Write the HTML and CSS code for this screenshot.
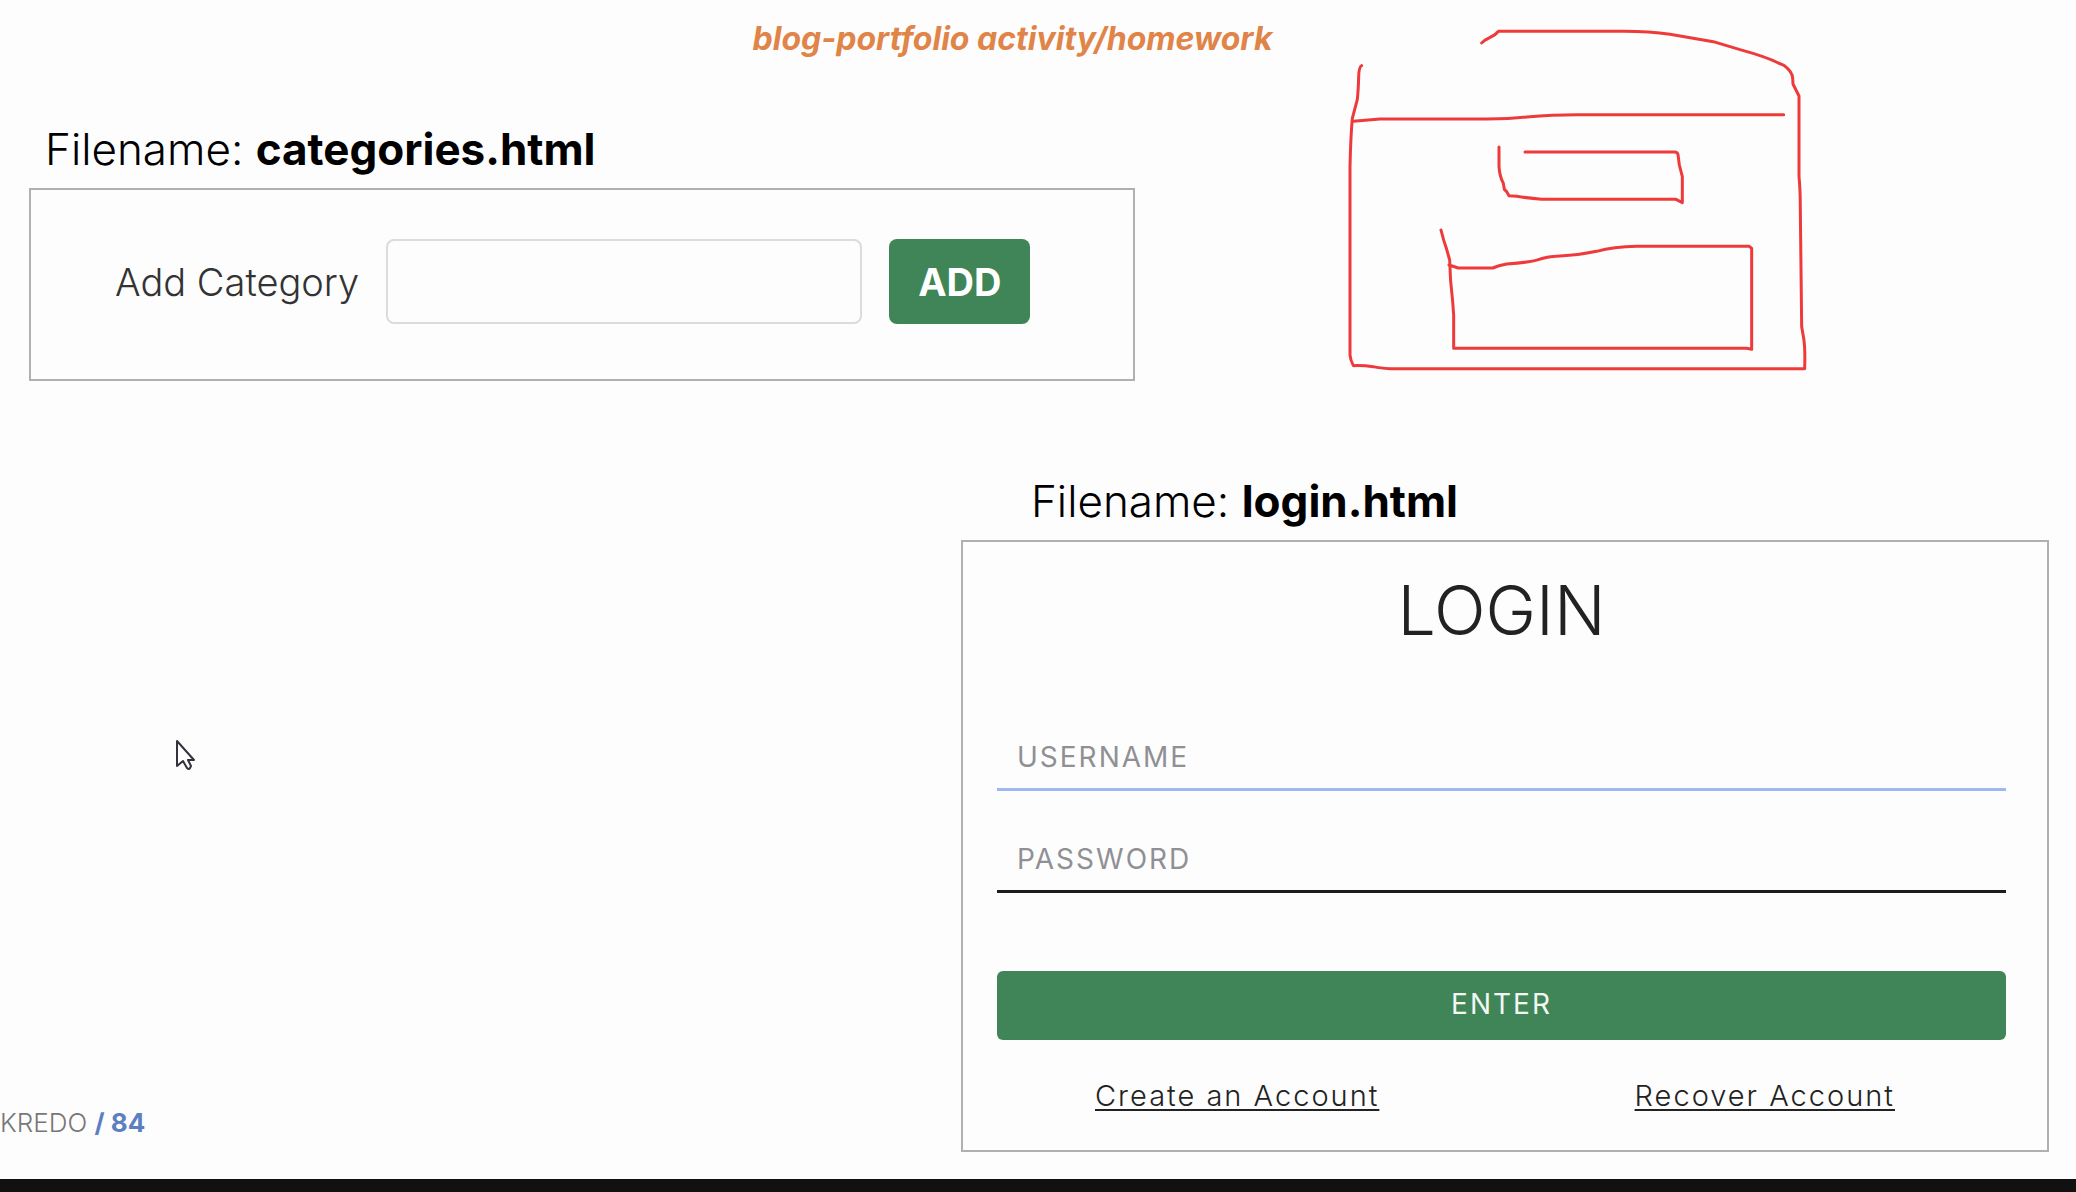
FILE: index.html
```html
<!DOCTYPE html>
<html lang="en">
<head>
<meta charset="utf-8">
<title>blog-portfolio activity/homework</title>
<link rel="stylesheet" href="styles.css">
</head>
<body>
<div class="slide">
  <h1 class="slide-title">blog-portfolio activity/homework</h1>

  <section class="categories">
    <h2 class="filename">Filename: <strong>categories.html</strong></h2>
    <form class="card category-form">
      <label for="category">Add Category</label>
      <input class="category-input" id="category" type="text">
      <button class="add-button" type="button">ADD</button>
    </form>
  </section>

  <div class="lower">
    <footer class="page-number">KREDO <b>/ 84</b></footer>
    <section class="login">
      <h2 class="filename">Filename: <strong>login.html</strong></h2>
      <form class="card login-form">
        <h3 class="login-title">LOGIN</h3>
        <input class="line-input username" type="text" placeholder="USERNAME" aria-label="Username">
        <input class="line-input password" type="password" placeholder="PASSWORD" aria-label="Password">
        <button class="enter-button" type="button">ENTER</button>
        <nav class="links">
          <a href="#create">Create an Account</a>
          <a href="#recover">Recover Account</a>
        </nav>
      </form>
    </section>
  </div>

  <!-- pen sketch of a page layout -->
  <svg class="sketch" viewBox="0 0 1500 1140" aria-hidden="true">
    <path d="M455 99L464 91L495 74L505 64H880Q960 64 1020 73L1150 95L1230 119Q1310 141 1345 159L1362 166Q1387 185 1388 204L1389 222L1407 258V500Q1411 540 1411 600L1415 950L1421 985Q1426 1015 1424 1076H180Q150 1075 130 1070Q100 1066 70 1067Q61 1050 60 1035V470Q62 380 67 325L82 268Q85 240 86 200Q87 170 95 167"/>
    <path d="M70 334L150 327H470Q540 327 590 321Q670 314 740 314H1361"/>
    <path d="M507 411V470Q509 500 520 520L523 538L530 545L537 557L560 559Q600 565 635 568H1038L1057 578V500L1048 465L1044 434Q1043 427 1035 426H585"/>
    <path d="M333 660Q340 690 350 718L359 750Q360 810 368 875L371 915V1015H1250L1265 1018V715L1258 709H920Q850 711 800 724Q750 735 700 737Q650 739 625 749Q600 757 530 762Q505 767 488 774H385L357 765"/>
  </svg>

  <svg class="cursor" viewBox="0 0 60 60" aria-hidden="true">
    <path d="M17 16V41L23 36L27 43Q29 45 30 43L31 41L28 35H34Z"/>
  </svg>
</div>
<div class="bottom-bar"></div>
</body>
</html>
```
FILE: styles.css
```css
* {
  box-sizing: border-box;
}

body {
  margin: 0;
  min-height: 100vh;
  display: flex;
  flex-direction: column;
  background: #fdfdfd;
  color: #000;
  font-family: Inter, "Open Sans", sans-serif;
  font-size: 28px;
}

.slide {
  position: relative;
  flex: 1;
  padding: 19px 27px 27px 0;
  overflow: hidden;
}

.slide-title {
  margin: 0 0 64px;
  padding-right: 24px;
  text-align: center;
  font-size: 32px;
  line-height: 40px;
  font-weight: 700;
  font-style: italic;
  color: #e08448;
}

.filename {
  margin: 0 0 13px;
  font-size: 44px;
  line-height: 52px;
  font-weight: 300;
}

.filename strong {
  font-weight: 700;
}

.card {
  border: 2px solid #b0b0b0;
}

.categories {
  width: 54%;
  margin-left: 29px;
}

.categories .filename {
  padding-left: 16px;
}

.category-form {
  display: flex;
  align-items: center;
  gap: 27px;
  padding: 49px 103px 55px 84px;
}

.category-form label {
  font-size: 38px;
  font-weight: 300;
  color: #333;
}

.category-input {
  flex: 1;
  min-width: 0;
  height: 85px;
  padding: 0 20px;
  border: 2px solid #dcdce0;
  border-radius: 8px;
  background: transparent;
  font: inherit;
}

.add-button {
  height: 85px;
  padding: 0 29px;
  border: 0;
  border-radius: 8px;
  background: #408558;
  color: #fff;
  font: 700 38px/48px Inter, "Open Sans", sans-serif;
}

.lower {
  display: flex;
  align-items: flex-end;
  justify-content: space-between;
  margin-top: 94px;
}

.page-number {
  padding-bottom: 13px;
  font-size: 26px;
  line-height: 32px;
  font-weight: 300;
  color: #777;
}

.page-number b {
  font-weight: 700;
  color: #5b7fc0;
}

.login {
  width: 53.1%;
}

.login .filename {
  padding-left: 70px;
}

.login-form {
  display: flex;
  flex-direction: column;
  padding: 28px 41px 36px 34px;
}

.login-title {
  margin: 0 0 85px;
  text-align: center;
  font-size: 68px;
  line-height: 80px;
  font-weight: 300;
  color: #222;
}

.line-input {
  height: 56px;
  padding: 0 20px 10px;
  border: 0;
  border-bottom: 3px solid #1c1c1c;
  background: transparent;
  font: inherit;
  letter-spacing: 2px;
}

.line-input::placeholder {
  color: #909094;
  opacity: 1;
}

.username {
  margin-bottom: 46px;
  border-color: #9db9f0;
}

.password {
  margin-bottom: 78px;
}

.enter-button {
  height: 69px;
  padding: 0 0 4px;
  border: 0;
  border-radius: 6px;
  background: #408558;
  color: #f2f7f3;
  font: inherit;
  letter-spacing: 2px;
}

.links {
  display: flex;
  justify-content: space-between;
  margin-top: 38px;
  padding: 0 111px 0 98px;
  font-size: 29px;
  line-height: 36px;
  font-weight: 300;
  letter-spacing: 2px;
}

.links a {
  color: #222;
  text-decoration-thickness: 2px;
  text-underline-offset: 3px;
  text-decoration-skip-ink: none;
}

.sketch {
  position: absolute;
  top: 10px;
  right: 246px;
  width: 500px;
  height: 380px;
  fill: none;
  stroke: #ee3a3a;
  stroke-width: 9;
  stroke-linecap: round;
  stroke-linejoin: round;
}

.cursor {
  position: absolute;
  top: 725px;
  left: 160px;
  width: 60px;
  height: 60px;
  fill: #fff;
  stroke: #33333f;
  stroke-width: 2;
  stroke-linejoin: round;
}

.bottom-bar {
  height: 13px;
  background: #111;
}
```
